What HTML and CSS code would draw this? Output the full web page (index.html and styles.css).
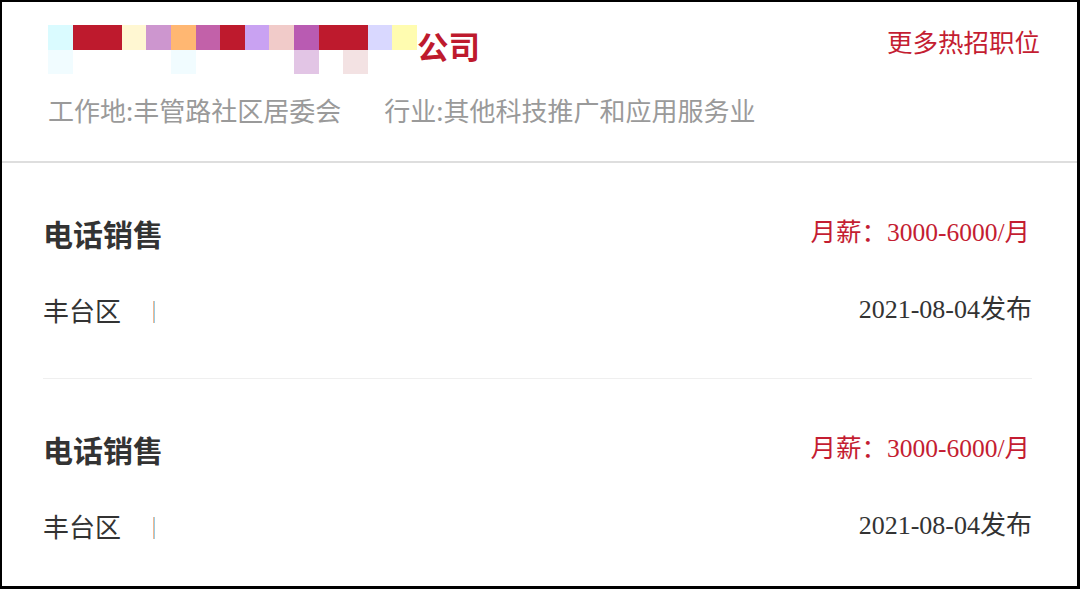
FILE: index.html
```html
<!DOCTYPE html>
<html>
<head>
    <meta charset="UTF-8">
    <title>公司招聘</title>
    <link rel="stylesheet" href="styles.css">
</head>
<body>
    <div class="page">
        <div class="company-header">
            <div class="company-top">
                <div class="company-name">
                    <div class="mosaic">
                        <span class="m-cyan"></span><span class="m-red"></span><span class="m-red"></span><span class="m-yellow"></span><span class="m-lilac"></span><span class="m-orange"></span><span class="m-magenta"></span><span class="m-red"></span><span class="m-lavender"></span><span class="m-pink"></span><span class="m-purple"></span><span class="m-red"></span><span class="m-red"></span><span class="m-periwinkle"></span><span class="m-lemon"></span>
                        <span class="m-faint-cyan"></span><span></span><span></span><span></span><span></span><span class="m-faint-cyan"></span><span></span><span></span><span></span><span></span><span class="m-faint-purple"></span><span></span><span class="m-faint-pink"></span><span></span><span></span>
                    </div>
                    <span class="company-suffix">公司</span>
                </div>
                <a class="more-jobs" href="#">更多热招职位</a>
            </div>
            <div class="company-info">
                <span>工作地:丰管路社区居委会</span>
                <span>行业:其他科技推广和应用服务业</span>
            </div>
        </div>

        <div class="job-list">
            <div class="job-item">
                <div class="job-row">
                    <div class="job-title">电话销售</div>
                    <div class="job-salary">月薪：3000-6000/月</div>
                </div>
                <div class="job-row job-meta">
                    <div class="job-location">丰台区<span class="sep"></span></div>
                    <div class="job-date">2021-08-04发布</div>
                </div>
            </div>
            <div class="job-item">
                <div class="job-row">
                    <div class="job-title">电话销售</div>
                    <div class="job-salary">月薪：3000-6000/月</div>
                </div>
                <div class="job-row job-meta">
                    <div class="job-location">丰台区<span class="sep"></span></div>
                    <div class="job-date">2021-08-04发布</div>
                </div>
            </div>
        </div>
    </div>
</body>
</html>
```

FILE: styles.css
```css
body {
    margin: 0;
    font-family: "Noto Sans CJK SC", "Liberation Sans", sans-serif;
    background-color: #fff;
    color: #333;
}

.page {
    height: 589px;
    box-sizing: border-box;
    border-style: solid;
    border-color: #000;
    border-width: 2px 3px 3px 2px;
    overflow: hidden;
    background-color: #fff;
}

/* Company header */
.company-header {
    padding: 23px 37px 36px 46px;
    border-bottom: 2px solid #dedede;
}

.company-top {
    display: flex;
    justify-content: space-between;
    align-items: flex-start;
}

.company-name {
    display: flex;
    align-items: flex-start;
}

.mosaic {
    display: grid;
    grid-template-columns: repeat(15, 24.6px);
    grid-auto-rows: 24.6px;
}

.m-red { background-color: #be1a2d; }
.m-cyan { background-color: #dafbff; }
.m-yellow { background-color: #fff7d2; }
.m-lilac { background-color: #cd96cf; }
.m-orange { background-color: #ffb772; }
.m-magenta { background-color: #c261a9; }
.m-lavender { background-color: #c9a2f2; }
.m-pink { background-color: #f1cbc9; }
.m-purple { background-color: #b95bb2; }
.m-periwinkle { background-color: #d9d8ff; }
.m-lemon { background-color: #fffcb0; }
.m-faint-cyan { background-color: #f1fcff; }
.m-faint-purple { background-color: #e2c5e5; }
.m-faint-pink { background-color: #f3e2e3; }

.company-suffix {
    font-size: 31.5px;
    line-height: 34px;
    font-weight: bold;
    color: #be1a2d;
    margin-top: 3px;
}

.more-jobs {
    font-size: 25.5px;
    line-height: 30px;
    color: #c41d32;
    text-decoration: none;
    margin-top: 1px;
}

.company-info {
    display: flex;
    gap: 43px;
    margin-top: 21px;
    font-size: 26px;
    line-height: 30px;
    color: #9a9a9a;
}

/* Job list */
.job-list {
    padding: 0 45px 0 41px;
}

.job-item {
    padding: 52px 0 53px;
    border-bottom: 1px solid #efefef;
}

.job-row {
    display: flex;
    justify-content: space-between;
    align-items: center;
}

.job-title {
    font-size: 30px;
    line-height: 36px;
    font-weight: bold;
    color: #333;
}

.job-salary {
    font-family: "Liberation Serif", "Noto Sans CJK SC", serif;
    font-size: 25.5px;
    line-height: 30px;
    color: #c41d32;
    margin-right: 2px;
}

.job-meta {
    margin-top: 44px;
}

.job-location {
    display: flex;
    align-items: center;
    font-size: 26px;
    line-height: 30px;
    color: #333;
}

.sep {
    display: inline-block;
    width: 2px;
    height: 22px;
    margin-left: 32px;
    margin-top: 3px;
    background: linear-gradient(to right, #f3b78f 50%, #98cde6 50%);
}

.job-date {
    font-family: "Liberation Serif", "Noto Sans CJK SC", serif;
    font-size: 26px;
    line-height: 30px;
    color: #333;
}
```
